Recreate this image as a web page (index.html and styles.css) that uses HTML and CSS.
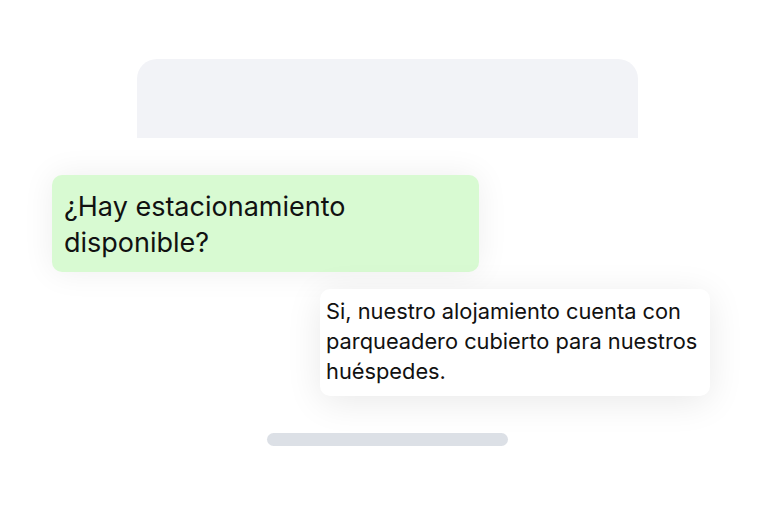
FILE: index.html
```html
<!DOCTYPE html>
<html lang="es">
<head>
<meta charset="utf-8">
<link rel="stylesheet" href="styles.css">
</head>
<body>
<div class="scene">
  <div class="header-card"></div>
  <div class="bubble bubble-user">¿Hay estacionamiento disponible?</div>
  <div class="bubble bubble-reply">Si, nuestro alojamiento cuenta con parqueadero cubierto para nuestros huéspedes.</div>
  <div class="input-bar"></div>
</div>
</body>
</html>
```

FILE: styles.css
```css
* { box-sizing: border-box; }
html, body {
  margin: 0;
  padding: 0;
  background: #ffffff;
}
body {
  width: 776px;
  height: 513px;
  overflow: hidden;
  font-family: Inter, "Noto Sans", sans-serif;
  color: #111111;
}
.scene {
  display: flex;
  flex-direction: column;
  align-items: flex-start;
  padding-top: 59px;
  height: 513px;
}
.header-card {
  margin-left: 137px;
  width: 501px;
  height: 79px;
  background: #f2f3f7;
  border-radius: 20px 20px 0 0;
}
.bubble {
  border-radius: 10px;
}
.bubble-user {
  margin-top: 37px;
  margin-left: 52px;
  width: 427px;
  height: 97px;
  padding: 14px 12px 11px;
  background: #d8fad2;
  font-size: 27px;
  line-height: 36px;
  box-shadow: 0 0 32px rgba(0, 0, 0, 0.07);
}
.bubble-reply {
  margin-top: 17px;
  margin-left: 320px;
  width: 390px;
  height: 107px;
  padding: 7px 6px 10px 6px;
  background: #ffffff;
  font-size: 21.8px;
  line-height: 30px;
  box-shadow: 0 6px 36px rgba(0, 0, 0, 0.09);
}
.input-bar {
  margin-top: 37px;
  margin-left: 267px;
  width: 241px;
  height: 13px;
  background: #dce0e6;
  border-radius: 7px;
}
```
